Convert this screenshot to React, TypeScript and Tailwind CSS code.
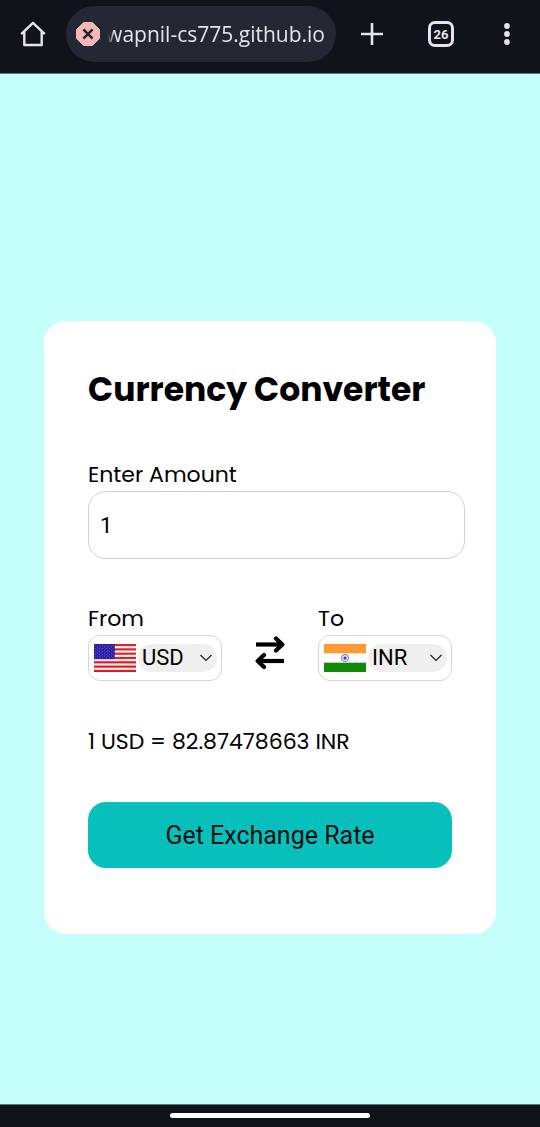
import { useState } from "react";

const rows = [0, 1, 2, 3, 4, 5, 6, 7, 8];

function UsFlag() {
  return (
    <svg viewBox="0 0 42 28" className="h-7 w-[42px] shrink-0" role="img" aria-label="United States">
      <rect width="42" height="28" fill="#f8f4f4" />
      {[0, 1, 2, 3, 4, 5, 6].map((n) => (
        <rect key={n} y={n * 4.31} width="42" height="2.15" fill={n > 3 ? "#e8171c" : "#d2282c"} />
      ))}
      <rect width="20.8" height="15.1" fill="#2a1fa4" />
      {rows.map((r) =>
        (r % 2 === 0 ? [0, 1, 2, 3, 4, 5] : [0, 1, 2, 3, 4]).map((c) => (
          <circle
            key={`${r}-${c}`}
            cx={1.8 + c * 3.45 + (r % 2) * 1.72}
            cy={1.5 + r * 1.5}
            r="0.4"
            fill="#a5a2e0"
          />
        )),
      )}
    </svg>
  );
}

function IndiaFlag() {
  return (
    <svg viewBox="0 0 42 28" className="h-7 w-[42px] shrink-0" role="img" aria-label="India">
      <rect width="42" height="28" fill="#fff" />
      <rect width="42" height="9.3" fill="#ff9a36" />
      <rect y="18.7" width="42" height="9.3" fill="#128807" />
      <circle cx="21" cy="14" r="3.7" fill="#d9d9f2" stroke="#7f7fc4" strokeWidth="0.9" />
      <circle cx="21" cy="14" r="1.5" fill="#3c3ca5" />
    </svg>
  );
}

function CurrencyField({
  id,
  label,
  flag,
  value,
  onChange,
}: {
  id: string;
  label: string;
  flag: React.ReactNode;
  value: string;
  onChange: (v: string) => void;
}) {
  return (
    <div className="flex w-[134px] flex-col">
      <label htmlFor={id} className="text-[22px] leading-8">
        {label}
      </label>
      <div className="flex h-[46px] items-center gap-0.5 rounded-xl border border-[#d6d6d6] pr-1 pl-[5px]">
        {flag}
        <div className="relative min-w-0 flex-1">
          <select
            id={id}
            value={value}
            onChange={(e) => onChange(e.target.value)}
            className="block h-7 w-full appearance-none rounded-full bg-[#efefef] pl-1 font-['Roboto',sans-serif] text-[22px] leading-7 text-black outline-none"
          >
            <option>USD</option>
            <option>INR</option>
          </select>
          <svg
            viewBox="0 0 14 8"
            className="pointer-events-none absolute top-2.5 right-1 h-2 w-3.5"
            fill="none"
            stroke="#222"
            strokeWidth="1.2"
          >
            <path d="M1.5 1 7 6.5 12.5 1" />
          </svg>
        </div>
      </div>
    </div>
  );
}

function BrowserBar() {
  return (
    <header className="flex h-[74px] items-start border-b border-[#5c7a79] bg-[#11131b] pt-1.5 text-[#e4e4ea]">
      <div className="flex h-14 w-full items-center">
        <button aria-label="Home" className="flex w-[66px] justify-center">
          <svg viewBox="0 0 26 26" className="size-[26px]" fill="none" stroke="currentColor" strokeWidth="2.4">
            <path d="M1.2 13.2 13 1.8 24.8 13.2M4.3 10.6V24H21.7V10.6" strokeLinejoin="round" />
          </svg>
        </button>
        <div className="flex h-14 min-w-0 flex-1 items-center gap-2 rounded-full bg-[#232834] pr-[11px] pl-2.5">
          <svg viewBox="0 0 24 24" className="size-6 shrink-0" role="img" aria-label="Not secure">
            <path
              d="M7.6.5h8.8L23.5 7.6v8.8L16.4 23.5H7.6L.5 16.4V7.6Z"
              fill="#f6b8b6"
              stroke="#f6b8b6"
              strokeLinejoin="round"
            />
            <path d="m7.4 7.4 9.2 9.2m0-9.2-9.2 9.2" stroke="#20232d" strokeWidth="2.4" />
          </svg>
          <div className="flex min-w-0 flex-1 justify-end overflow-hidden font-['Open_Sans','Noto_Sans',sans-serif] text-[21px] leading-8 whitespace-nowrap mask-[linear-gradient(to_right,transparent,black_6px)]">
            wapnil-cs775.github.io
          </div>
        </div>
        <button aria-label="New tab" className="flex w-[72px] justify-center">
          <svg viewBox="0 0 22 22" className="size-[22px]" stroke="currentColor" strokeWidth="2.6">
            <path d="M11 0v22M0 11h22" />
          </svg>
        </button>
        <button aria-label="26 open tabs" className="flex w-[66px] justify-center">
          <span className="flex size-[26px] items-center justify-center rounded-[7px] border-[3px] border-current font-['Roboto',sans-serif] text-[13px] leading-none font-bold">
            26
          </span>
        </button>
        <button aria-label="Menu" className="flex w-[66px] justify-center">
          <svg viewBox="0 0 6 22" className="h-[22px] w-1.5" fill="currentColor">
            <circle cx="3" cy="3" r="2.9" />
            <circle cx="3" cy="11" r="2.9" />
            <circle cx="3" cy="19" r="2.9" />
          </svg>
        </button>
      </div>
    </header>
  );
}

export default function App() {
  const [amount, setAmount] = useState("1");
  const [from, setFrom] = useState("USD");
  const [to, setTo] = useState("INR");

  return (
    <div className="flex min-h-screen flex-col bg-[#c4fff9] font-['Poppins','Inter',sans-serif] text-black">
      <BrowserBar />
      <main className="flex flex-1 flex-col justify-center px-11 pt-[77px]">
        <form
          onSubmit={(e) => e.preventDefault()}
          className="flex flex-col rounded-[22px] bg-white px-11 pt-[45px] pb-[66px]"
        >
          <h1 className="text-[33px] leading-[48px] font-bold whitespace-nowrap">Currency Converter</h1>
          <label htmlFor="amount" className="mt-[45px] text-[22px] leading-8">
            Enter Amount
          </label>
          <input
            id="amount"
            type="text"
            inputMode="decimal"
            value={amount}
            onChange={(e) => setAmount(e.target.value)}
            className="-mr-[13px] h-[68px] rounded-[18px] border border-[#d0d0d0] px-[11px] font-['Roboto',sans-serif] text-[22px] outline-none"
          />
          <div className="mt-11 flex items-end justify-between">
            <CurrencyField
              id="from"
              label="From"
              flag={from === "USD" ? <UsFlag /> : <IndiaFlag />}
              value={from}
              onChange={setFrom}
            />
            <button
              type="button"
              aria-label="Swap currencies"
              className="mb-3"
              onClick={() => {
                setFrom(to);
                setTo(from);
              }}
            >
              <svg
                viewBox="0 0 30 34"
                className="h-[34px] w-[30px]"
                fill="none"
                stroke="currentColor"
                strokeWidth="4.2"
                strokeLinecap="round"
                strokeLinejoin="round"
              >
                <path d="M1 9.5H27" strokeLinecap="butt" />
                <path d="M21 3.5 27.3 9.5 21 15.5" />
                <path d="M29 26H3" strokeLinecap="butt" />
                <path d="M9 20 2.7 26 9 32" />
              </svg>
            </button>
            <CurrencyField
              id="to"
              label="To"
              flag={to === "USD" ? <UsFlag /> : <IndiaFlag />}
              value={to}
              onChange={setTo}
            />
          </div>
          <p className="mt-[45px] text-[22px] leading-8">1 USD = 82.87478663 INR</p>
          <button
            type="submit"
            className="mt-11 h-[66px] rounded-[18px] bg-[#08c0bb] pt-0.5 font-['Roboto',sans-serif] text-[25px] text-[#04100f]"
          >
            Get Exchange Rate
          </button>
        </form>
      </main>
      <footer className="flex h-[23px] items-start justify-center border-t border-[#5c7a79] bg-[#11131b] pt-2">
        <div className="h-[5px] w-[200px] rounded-full bg-white" />
      </footer>
    </div>
  );
}
